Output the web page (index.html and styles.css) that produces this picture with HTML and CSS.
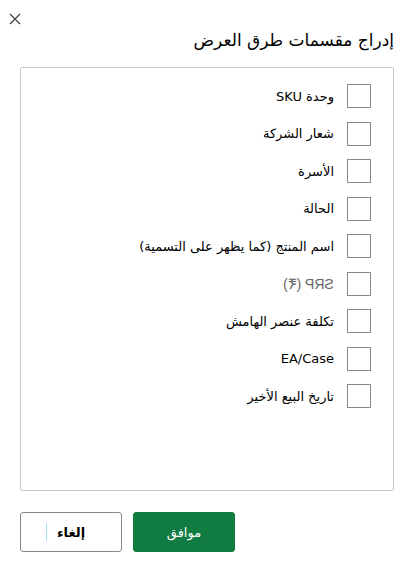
FILE: index.html
```html
<!DOCTYPE html>
<html lang="ar" dir="rtl">
<head>
  <meta charset="UTF-8" />
  <title>إدراج مقسمات طرق العرض</title>
  <link rel="stylesheet" href="styles.css">
</head>
<body>
  <div class="dialog">
    <button class="close-btn" title="إغلاق">
      <svg width="12" height="12" viewBox="0 0 12 12"><path d="M1 1 L11 11 M11 1 L1 11" stroke="#444" stroke-width="1.3" fill="none"/></svg>
    </button>

    <h1 class="title">إدراج مقسمات طرق العرض</h1>

    <div class="field-list">
      <label class="field"><span class="box"></span><span>وحدة SKU</span></label>
      <label class="field"><span class="box"></span><span>شعار الشركة</span></label>
      <label class="field"><span class="box"></span><span>الأسرة</span></label>
      <label class="field"><span class="box"></span><span>الحالة</span></label>
      <label class="field"><span class="box"></span><span>اسم المنتج (كما يظهر على التسمية)</span></label>
      <label class="field"><span class="box"></span><span class="mirrored" dir="ltr">SRP (₹)</span></label>
      <label class="field"><span class="box"></span><span>تكلفة عنصر الهامش</span></label>
      <label class="field"><span class="box"></span><span dir="ltr">EA/Case</span></label>
      <label class="field"><span class="box"></span><span>تاريخ البيع الأخير</span></label>
    </div>

    <div class="actions">
      <button class="btn btn-ok">موافق</button>
      <button class="btn btn-cancel">إلغاء<span class="caret"></span></button>
    </div>
  </div>
</body>
</html>
```

FILE: styles.css
```css
body {
  margin: 0;
  font-family: "DejaVu Sans", "Noto Sans", sans-serif;
  background: #fff;
  color: #000;
}

.dialog {
  position: relative;
  width: 418px;
  height: 577px;
  box-sizing: border-box;
  padding: 28px 24px 0 20px;
}

.close-btn {
  position: absolute;
  left: 9px;
  top: 13px;
  width: 12px;
  height: 12px;
  padding: 0;
  border: none;
  background: none;
  cursor: pointer;
}

.close-btn svg {
  display: block;
}

.title {
  margin: 0;
  font-size: 17px;
  font-weight: normal;
  line-height: 24px;
  height: 24px;
}

.field-list {
  margin-top: 15px;
  height: 424px;
  box-sizing: border-box;
  border: 1px solid #c8c8c8;
  border-radius: 2px;
  padding: 16px 22px 0 0;
  display: flex;
  flex-direction: column;
  gap: 13.5px;
}

.field {
  display: flex;
  align-items: center;
  gap: 13px;
  height: 24px;
  font-size: 13px;
  cursor: pointer;
}

.box {
  width: 24px;
  height: 24px;
  box-sizing: border-box;
  border: 1px solid #8a8a8a;
  flex-shrink: 0;
}

.mirrored {
  display: inline-block;
  transform: scaleX(-1);
  color: #666;
  font-family: "Liberation Sans", sans-serif;
  font-size: 14px;
}

.actions {
  display: flex;
  justify-content: flex-end;
  gap: 11px;
  margin-top: 21px;
}

.btn {
  width: 102px;
  height: 40px;
  border-radius: 3px;
  font-family: inherit;
  font-size: 13px;
  cursor: pointer;
}

.btn-ok {
  background: #107c41;
  border: 1px solid #107c41;
  color: #fff;
}

.btn-cancel {
  position: relative;
  background: #fff;
  border: 1px solid #8a8a8a;
  color: #000;
  font-weight: bold;
}

.caret {
  position: absolute;
  left: 25px;
  top: 10px;
  width: 1px;
  height: 18px;
  background: #a9dcf5;
}
```
